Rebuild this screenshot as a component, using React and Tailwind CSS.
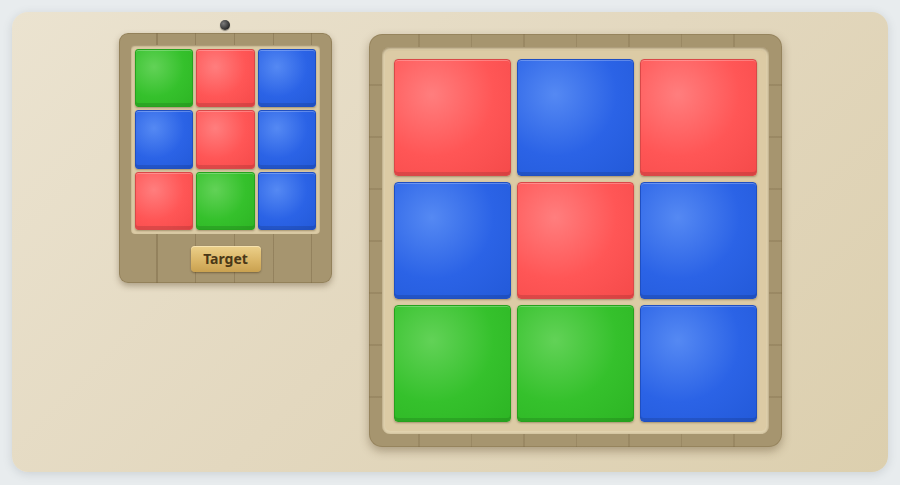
import React from "react";

const cellCls = {
  r: "bg-[radial-gradient(circle_at_32%_30%,#ff7e7e_0%,#ff5656_55%,#f54a4a_100%)] border-[#d94848]",
  b: "bg-[radial-gradient(circle_at_32%_30%,#5589f3_0%,#2b63e6_55%,#235ad9_100%)] border-[#1f4fc2]",
  g: "bg-[radial-gradient(circle_at_32%_30%,#62d257_0%,#35c12c_55%,#2db524_100%)] border-[#26a21e]",
};

function Cell({ c, big }) {
  return (
    <div
      className={`aspect-square border ${big ? "rounded-[4px]" : "rounded-[3px]"} ${cellCls[c]} shadow-[inset_0_-3px_0_rgba(0,0,0,0.12),inset_0_1px_0_rgba(255,255,255,0.25),0_1px_2px_rgba(60,40,10,0.35)]`}
    />
  );
}

const target = ["g", "r", "b", "b", "r", "b", "r", "g", "b"];
const board = ["r", "b", "r", "b", "r", "b", "g", "g", "b"];

export default function App() {
  return (
    <div className="w-[900px] h-[485px] bg-[#e8ecee] p-3 font-['Noto_Sans',sans-serif]">
      <div className="relative w-[876px] h-[460px] rounded-[16px] bg-[linear-gradient(135deg,#ebe3d0_0%,#e3d8bf_50%,#dccfae_100%)] shadow-[0_2px_10px_rgba(80,90,100,0.18)] pl-[107px] pt-[21px] flex items-start gap-[37px]">
        {/* Target panel */}
        <div className="relative w-[213px] h-[250px] rounded-[9px] bg-[#a6956f] bg-[repeating-linear-gradient(90deg,transparent_0px,transparent_37.5px,rgba(80,60,30,0.22)_37.5px,rgba(80,60,30,0.22)_38.7px)] shadow-[0_3px_6px_rgba(70,50,20,0.35),inset_0_0_0_1px_rgba(120,100,60,0.4)] pt-[12px] px-[12px] flex flex-col items-center">
          <div className="absolute -top-[13px] left-[101px] w-[10px] h-[10px] rounded-full bg-[radial-gradient(circle_at_35%_35%,#7a7a7a,#2a2a2a_70%)] shadow-[0_1px_1px_rgba(0,0,0,0.4)]" />
          <div className="w-[189px] rounded-[4px] bg-[#dccca6] p-[4px] shadow-[inset_0_1px_2px_rgba(80,60,30,0.45)]">
            <div className="grid grid-cols-3 gap-[3px]">
              {target.map((c, i) => (
                <Cell key={i} c={c} />
              ))}
            </div>
          </div>
          <div className="mt-[12px] w-[70px] h-[26px] rounded-[4px] bg-[linear-gradient(180deg,#ecd08a_0%,#d9b465_60%,#c9a150_100%)] shadow-[0_1px_2px_rgba(60,40,10,0.45),inset_0_1px_0_rgba(255,240,200,0.6)] flex items-center justify-center text-[14px] font-bold text-[#4a3817] leading-none">
            Target
          </div>
        </div>

        {/* Board */}
        <div className="mt-[1px] w-[413px] h-[413px] rounded-[13px] bg-[#a6956f] bg-[repeating-linear-gradient(90deg,transparent_0px,transparent_49.5px,rgba(80,60,30,0.14)_49.5px,rgba(80,60,30,0.14)_50.7px,transparent_50.7px,transparent_52.5px),repeating-linear-gradient(0deg,transparent_0px,transparent_49.5px,rgba(80,60,30,0.14)_49.5px,rgba(80,60,30,0.14)_50.7px,transparent_50.7px,transparent_52px)] shadow-[0_4px_10px_rgba(70,50,20,0.35),inset_0_0_0_1px_rgba(120,100,60,0.35)] p-[13px]">
          <div className="w-[387px] h-[387px] rounded-[8px] bg-[#dccba5] p-[12px] shadow-[inset_0_1px_3px_rgba(70,50,20,0.5),inset_0_0_0_3px_rgba(235,225,195,0.35)]">
            <div className="grid grid-cols-3 gap-[6px]">
              {board.map((c, i) => (
                <Cell key={i} c={c} big />
              ))}
            </div>
          </div>
        </div>
      </div>
    </div>
  );
}
